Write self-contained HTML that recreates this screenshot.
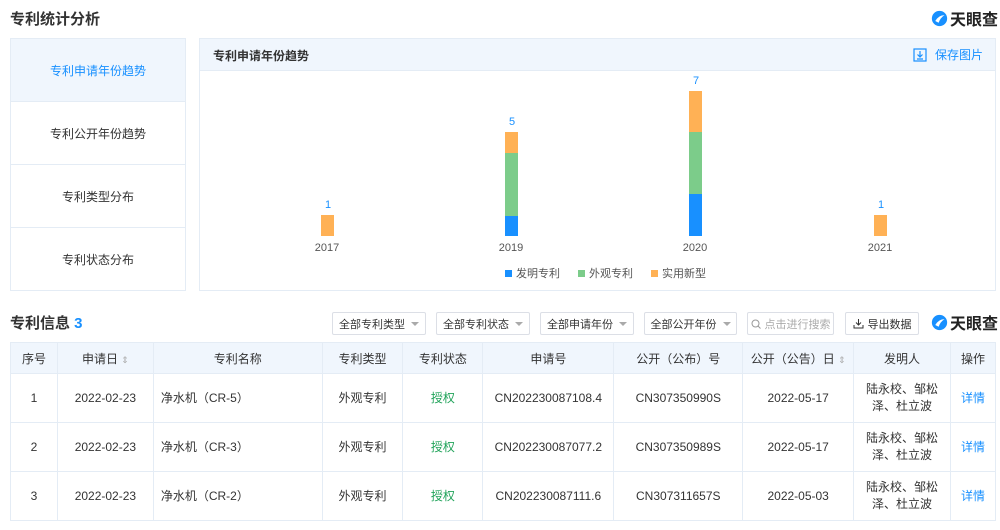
<!DOCTYPE html>
<html><head><meta charset="utf-8"><style>
*{margin:0;padding:0;box-sizing:border-box}
body{width:1000px;height:530px;background:#fff;font-family:"Liberation Sans","Noto Sans CJK SC",sans-serif;color:#333;position:relative;overflow:hidden;font-size:12px}
.abs{position:absolute}
.h{font-size:15px;font-weight:bold;color:#333}
.logo{font-size:16px;font-weight:bold;color:#222;display:flex;align-items:center;gap:2px}
.side{left:10px;top:38px;width:176px;height:253px;border:1px solid #e4ecf5}
.side div{height:63px;border-bottom:1px solid #e4ecf5;display:flex;align-items:center;justify-content:center;font-size:12px;color:#333}
.side div:last-child{border-bottom:none}
.panel{left:199px;top:38px;width:797px;height:253px;border:1px solid #e4ecf5}
.ph{height:32px;background:#f0f6fd;border-bottom:1px solid #e4ecf5;font-size:12px;font-weight:bold;padding:8px 0 0 13px}
.bar{position:absolute;width:13px}
.o{background:#ffb155}.g{background:#7ccc8a}.b{background:#1890ff}
.num{position:absolute;color:#1890ff;font-size:11px;width:30px;text-align:center}
.yr{position:absolute;color:#555;font-size:11px;width:40px;text-align:center}
.btn{position:absolute;top:312px;height:23px;border:1px solid #dcdfe6;border-radius:2px;font-size:11px;color:#333;display:flex;align-items:center;justify-content:center;gap:6px}
.tri{width:0;height:0;border-left:4px solid transparent;border-right:4px solid transparent;border-top:4px solid #aaa}
table{position:absolute;left:10px;top:342px;width:986px;border-collapse:collapse;font-size:12px}
td,th{border:1px solid #e4ecf5;text-align:center;font-weight:normal;color:#333}
th{height:31px;background:#f0f6fd}
td{height:49px;line-height:17px}
.l{text-align:left;padding-left:7px}
.gr{color:#21a35a}.bl{color:#1890ff}
</style></head><body>
<div class="abs h" style="left:10px;top:8px">专利统计分析</div>
<div class="abs logo" style="left:931px;top:6px"><svg width="17" height="17" viewBox="0 0 20 20"><circle cx="10" cy="10" r="9" fill="#1890ff"/><path d="M5 13 Q9 6 16 6 Q11 9 9 15Z" fill="#fff"/></svg>天眼查</div>
<div class="abs side">
<div style="background:#f0f6fd;color:#1890ff">专利申请年份趋势</div>
<div>专利公开年份趋势</div><div>专利类型分布</div><div>专利状态分布</div></div>
<div class="abs panel"><div class="ph">专利申请年份趋势</div>
<div class="abs" style="right:12px;top:7px;font-size:12px;color:#1890ff;display:flex;gap:8px;align-items:center"><svg width="14" height="14" viewBox="0 0 14 14" fill="none" stroke="#1890ff" stroke-width="1.2"><rect x="1" y="1" width="12" height="12"/><path d="M7 3v6M4.5 6.5L7 9l2.5-2.5M4 11h6"/></svg>保存图片</div>
</div>
<div class="num" style="left:313px;top:199px">1</div>
<div class="bar o" style="left:321px;top:215px;height:21px"></div>
<div class="yr" style="left:307px;top:242px">2017</div>
<div class="num" style="left:497px;top:116px">5</div>
<div class="bar o" style="left:505px;top:132px;height:21px"></div>
<div class="bar g" style="left:505px;top:153px;height:63px"></div>
<div class="bar b" style="left:505px;top:216px;height:20px"></div>
<div class="yr" style="left:491px;top:242px">2019</div>
<div class="num" style="left:681px;top:75px">7</div>
<div class="bar o" style="left:689px;top:91px;height:41px"></div>
<div class="bar g" style="left:689px;top:132px;height:62px"></div>
<div class="bar b" style="left:689px;top:194px;height:42px"></div>
<div class="yr" style="left:675px;top:242px">2020</div>
<div class="num" style="left:866px;top:199px">1</div>
<div class="bar o" style="left:874px;top:215px;height:21px"></div>
<div class="yr" style="left:860px;top:242px">2021</div>
<div class="abs" style="left:505px;top:265px;font-size:11px;color:#555;display:flex;gap:18px">
<span><i style="display:inline-block;width:7px;height:7px;background:#1890ff;margin-right:4px"></i>发明专利</span>
<span><i style="display:inline-block;width:7px;height:7px;background:#7ccc8a;margin-right:4px"></i>外观专利</span>
<span><i style="display:inline-block;width:7px;height:7px;background:#ffb155;margin-right:4px"></i>实用新型</span></div>
<div class="abs h" style="left:10px;top:312px">专利信息 <span style="color:#1890ff">3</span></div>
<div class="btn" style="left:332px;width:94px">全部专利类型<i class="tri"></i></div>
<div class="btn" style="left:436px;width:94px">全部专利状态<i class="tri"></i></div>
<div class="btn" style="left:540px;width:94px">全部申请年份<i class="tri"></i></div>
<div class="btn" style="left:644px;width:93px">全部公开年份<i class="tri"></i></div>
<div class="btn" style="left:747px;width:87px;color:#aaa;gap:4px"><svg width="10" height="10" viewBox="0 0 10 10" fill="none" stroke="#999"><circle cx="4.5" cy="4.5" r="3.5"/><path d="M7 7l2.5 2.5"/></svg>点击进行搜索</div>
<div class="btn" style="left:845px;width:74px;gap:4px"><svg width="11" height="11" viewBox="0 0 11 11" fill="none" stroke="#333"><path d="M5.5 1v6M3 4.5l2.5 2.5 2.5-2.5M1 7v3h9V7"/></svg>导出数据</div>
<div class="abs logo" style="left:931px;top:310px"><svg width="17" height="17" viewBox="0 0 20 20"><circle cx="10" cy="10" r="9" fill="#1890ff"/><path d="M5 13 Q9 6 16 6 Q11 9 9 15Z" fill="#fff"/></svg>天眼查</div>
<table>
<colgroup><col style="width:47px"><col style="width:96px"><col style="width:169px"><col style="width:81px"><col style="width:80px"><col style="width:131px"><col style="width:129px"><col style="width:111px"><col style="width:97px"><col style="width:45px"></colgroup>
<tr><th>序号</th><th>申请日 <span style="color:#aaa;font-size:9px">⇕</span></th><th>专利名称</th><th>专利类型</th><th>专利状态</th><th>申请号</th><th>公开（公布）号</th><th>公开（公告）日 <span style="color:#aaa;font-size:9px">⇕</span></th><th>发明人</th><th>操作</th></tr>
<tr><td>1</td><td>2022-02-23</td><td class="l">净水机（CR-5）</td><td>外观专利</td><td class="gr">授权</td><td>CN202230087108.4</td><td>CN307350990S</td><td>2022-05-17</td><td>陆永校、邹松<br>泽、杜立波</td><td class="bl">详情</td></tr>
<tr><td>2</td><td>2022-02-23</td><td class="l">净水机（CR-3）</td><td>外观专利</td><td class="gr">授权</td><td>CN202230087077.2</td><td>CN307350989S</td><td>2022-05-17</td><td>陆永校、邹松<br>泽、杜立波</td><td class="bl">详情</td></tr>
<tr><td>3</td><td>2022-02-23</td><td class="l">净水机（CR-2）</td><td>外观专利</td><td class="gr">授权</td><td>CN202230087111.6</td><td>CN307311657S</td><td>2022-05-03</td><td>陆永校、邹松<br>泽、杜立波</td><td class="bl">详情</td></tr>
</table>
</body></html>
